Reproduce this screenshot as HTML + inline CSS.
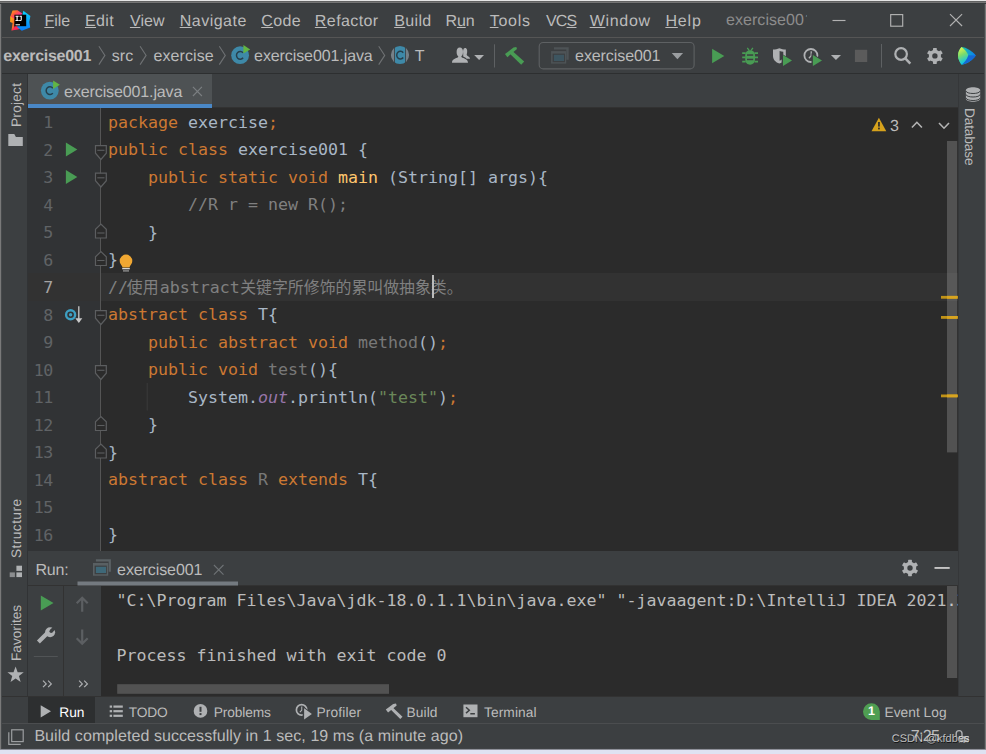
<!DOCTYPE html>
<html><head><meta charset="utf-8"><title>exercise001</title>
<style>
*{box-sizing:border-box;margin:0;padding:0}
html,body{width:986px;height:754px;overflow:hidden;background:#3c3f41}
body{position:relative;font-family:"Liberation Sans","Noto Sans CJK SC",sans-serif;font-size:16px;color:#bbbbbb}
.abs{position:absolute}
svg{position:absolute;overflow:visible}
.t{position:absolute;white-space:pre;line-height:1;text-rendering:geometricPrecision}
.t u{text-decoration:underline;text-decoration-thickness:1px;text-underline-offset:1.2px}
#menubar{left:0;top:0;width:986px;height:38px;background:#3c3f41;border-bottom:1px solid #555555}
#navbar{left:0;top:38px;width:986px;height:36px;background:#3c3f41;border-bottom:1px solid #2d2f30}
#lstrip{left:0;top:74px;width:28px;height:622px;background:#3c3f41;border-right:1px solid #313335}
#rstrip{left:958px;top:74px;width:28px;height:623px;background:#3c3f41;border-left:1px solid #353739}
#tabbar{left:28px;top:74px;width:930px;height:34px;background:#3c3f41;border-bottom:1px solid #323232}
#tab{left:28px;top:74px;width:184px;height:34px;background:#4e5254;border-bottom:4px solid #4a88c7}
#editor{left:28px;top:108px;width:930px;height:443px;background:#2b2b2b;overflow:hidden}
#gutter{left:0;top:0;width:72.5px;height:443px;background:#313335}
#gline{left:72.3px;top:0;width:1px;height:443px;background:#555555}
#caretrow{left:0;top:165px;width:930px;height:27.5px;background:#323232}
#caret{left:403.6px;top:167px;width:2px;height:23px;background:#bbbbbb}
.code{font-family:"DejaVu Sans Mono","Liberation Mono","Noto Sans CJK SC",monospace;font-size:16.61px;color:#a9b7c6;position:absolute;white-space:pre;height:27.5px;line-height:27.5px}
.ln{left:0;width:24.7px;text-align:right;color:#606366;letter-spacing:-0.5px;margin-top:0.7px}
.ln.cur{color:#a4a3a3}
.cl{left:80.0px}
.k{color:#cc7832}.c{color:#808080}.s{color:#6a8759}.f{color:#ffc66d}.i{color:#9876aa;font-style:italic}.g{color:#787878}
.cj{color:#808080;font-family:"Noto Sans CJK SC","Liberation Sans",sans-serif}
#runhdr{left:28px;top:551px;width:930px;height:35px;background:#3c3f41;border-bottom:1px solid #323232}
#runtool1{left:28px;top:586px;width:36px;height:110px;background:#3c3f41;border-right:1px solid #323232}
#runtool2{left:64px;top:586px;width:37px;height:110px;background:#3c3f41}
#console{left:101px;top:586px;width:857px;height:110px;background:#2b2b2b;overflow:hidden}
.con{font-family:"DejaVu Sans Mono","Liberation Mono","Noto Sans CJK SC",monospace;font-size:16.61px;color:#bbbbbb;position:absolute;white-space:pre;height:27.5px;line-height:27.5px;left:15.5px}
#toolstrip{left:0;top:696px;width:986px;height:28px;background:#3c3f41;border-top:1px solid #323232}
#runbtn{left:28px;top:697px;width:67px;height:26px;background:#2d2f30}
#statusbar{left:0;top:723px;width:986px;height:26px;background:#3c3f41;border-top:1px solid #4b4d4f}
#bottom{left:0;top:748px;width:986px;height:6px;background:linear-gradient(#3c3f41 0,#3c3f41 .4px,#55575b 1px,#9a9ca6 1.6px,#dfe2f2 2.2px,#dfe2f2 6px)}
#topedge{left:0;top:0;width:986px;height:4px;background:linear-gradient(#e6e6e6 0,#e6e6e6 1px,#626262 1px,#626262 2px,#757575 2px,#757575 3px,#393c3e 3px,#393c3e 4px)}
#leftedge{left:0;top:1px;width:2px;height:748px;background:linear-gradient(90deg,#797979 0,#797979 1px,#46494b 1px,#46494b 2px)}
#rightedge{left:984px;top:1px;width:2px;height:748px;background:linear-gradient(90deg,#484b4d 0,#484b4d 1px,#787878 1px,#787878 2px)}
</style></head><body>
<div class="abs" id="menubar"></div>
<div class="abs" id="navbar"></div>
<div class="abs" id="lstrip"></div>
<div class="abs" id="rstrip"></div>
<div class="abs" id="tabbar"></div>
<div class="abs" id="tab"></div>
<div class="abs" id="editor">
<div class="abs" id="gutter"></div>
<div class="abs" id="caretrow"></div>
<div class="abs" id="gline"></div>
<div class="code ln" style="top:0.80px">1</div>
<div class="code cl" style="top:0.80px"><span class="k">package</span> exercise<span class="k">;</span></div>
<div class="code ln" style="top:28.30px">2</div>
<div class="code cl" style="top:28.30px"><span class="k">public class</span> exercise001 {</div>
<div class="code ln" style="top:55.80px">3</div>
<div class="code cl" style="top:55.80px">    <span class="k">public static void</span> <span class="f">main</span> (String[] args){</div>
<div class="code ln" style="top:83.30px">4</div>
<div class="code cl" style="top:83.30px">        <span class="c">//R r = new R();</span></div>
<div class="code ln" style="top:110.80px">5</div>
<div class="code cl" style="top:110.80px">    }</div>
<div class="code ln" style="top:138.30px">6</div>
<div class="code cl" style="top:138.30px">}</div>
<div class="code ln cur" style="top:165.80px">7</div>
<div class="code ln" style="top:193.30px">8</div>
<div class="code cl" style="top:193.30px"><span class="k">abstract class</span> T{</div>
<div class="code ln" style="top:220.80px">9</div>
<div class="code cl" style="top:220.80px">    <span class="k">public abstract void</span> <span class="g">method</span>()<span class="k">;</span></div>
<div class="code ln" style="top:248.30px">10</div>
<div class="code cl" style="top:248.30px">    <span class="k">public void</span> <span class="g">test</span>(){</div>
<div class="code ln" style="top:275.80px">11</div>
<div class="code cl" style="top:275.80px">        System.<span class="i">out</span>.println(<span class="s">"test"</span>)<span class="k">;</span></div>
<div class="code ln" style="top:303.30px">12</div>
<div class="code cl" style="top:303.30px">    }</div>
<div class="code ln" style="top:330.80px">13</div>
<div class="code cl" style="top:330.80px">}</div>
<div class="code ln" style="top:358.30px">14</div>
<div class="code cl" style="top:358.30px"><span class="k">abstract class</span> <span class="g">R</span> <span class="k">extends</span> T{</div>
<div class="code ln" style="top:385.80px">15</div>
<div class="code ln" style="top:413.30px">16</div>
<div class="code cl" style="top:413.30px">}</div>
<div class="code cl c" style="top:165.80px;left:80.00px">//</div>
<div class="code cl cj" style="top:164.70px;left:98.80px;font-size:15.9px">使用</div>
<div class="code cl c" style="top:165.80px;left:131.80px">abstract</div>
<div class="code cl cj" style="top:164.70px;left:212.20px;font-size:15.9px">关键字所修饰的累叫做抽象类。</div>
<div class="abs" id="caret"></div>
<!--EDITOR_ICONS-->
</div>
<div class="abs" id="runhdr"></div>
<div class="abs" id="runtool1"></div>
<div class="abs" id="runtool2"></div>
<div class="abs" id="console">
<div class="con" style="top:0.80px">"C:\Program Files\Java\jdk-18.0.1.1\bin\java.exe" "-javaagent:D:\IntelliJ IDEA 2021.3</div>
<div class="con" style="top:55.80px">Process finished with exit code 0</div>
</div>
<div class="abs" id="toolstrip"></div>
<div class="abs" id="runbtn"></div>
<div class="abs" id="statusbar"></div>
<div class="abs" id="bottom"></div>
<div class="t" id="m_file" style="left:44.38px;top:13.52px;font-size:16px;color:#bbbbbb;letter-spacing:-0.018px;"><u>F</u>ile</div>
<div class="t" id="m_edit" style="left:84.98px;top:13.52px;font-size:16px;color:#bbbbbb;letter-spacing:0.412px;"><u>E</u>dit</div>
<div class="t" id="m_view" style="left:129.93px;top:13.52px;font-size:16px;color:#bbbbbb;letter-spacing:0.090px;"><u>V</u>iew</div>
<div class="t" id="m_nav" style="left:179.68px;top:13.52px;font-size:16px;color:#bbbbbb;letter-spacing:0.502px;"><u>N</u>avigate</div>
<div class="t" id="m_code" style="left:261.20px;top:13.52px;font-size:16px;color:#bbbbbb;letter-spacing:0.379px;"><u>C</u>ode</div>
<div class="t" id="m_ref" style="left:314.86px;top:13.52px;font-size:16px;color:#bbbbbb;letter-spacing:0.409px;"><u>R</u>efactor</div>
<div class="t" id="m_build" style="left:394.18px;top:13.52px;font-size:16px;color:#bbbbbb;letter-spacing:0.372px;"><u>B</u>uild</div>
<div class="t" id="m_run" style="left:445.40px;top:13.52px;font-size:16px;color:#bbbbbb;letter-spacing:-0.055px;">R<u>u</u>n</div>
<div class="t" id="m_tools" style="left:489.82px;top:13.52px;font-size:16px;color:#bbbbbb;letter-spacing:0.701px;"><u>T</u>ools</div>
<div class="t" id="m_vcs" style="left:545.96px;top:13.52px;font-size:16px;color:#bbbbbb;letter-spacing:-0.800px;">VC<u>S</u></div>
<div class="t" id="m_win" style="left:589.66px;top:13.52px;font-size:16px;color:#bbbbbb;letter-spacing:0.707px;"><u>W</u>indow</div>
<div class="t" id="m_help" style="left:665.38px;top:13.52px;font-size:16px;color:#bbbbbb;letter-spacing:0.886px;"><u>H</u>elp</div>
<div class="t" id="m_title" style="left:726.09px;top:12.72px;font-size:16px;color:#8c8c8c;letter-spacing:0.042px;">exercise00</div>
<div class="t" id="n_proj" style="left:3.36px;top:49.02px;font-size:16px;color:#bbbbbb;letter-spacing:-0.281px;font-weight:bold;">exercise001</div>
<div class="t" id="n_src" style="left:111.75px;top:49.02px;font-size:16px;color:#bbbbbb;letter-spacing:0.069px;">src</div>
<div class="t" id="n_ex" style="left:153.62px;top:49.02px;font-size:16px;color:#bbbbbb;letter-spacing:0.058px;">exercise</div>
<div class="t" id="n_file" style="left:254.09px;top:49.02px;font-size:16px;color:#bbbbbb;letter-spacing:-0.093px;">exercise001.java</div>
<div class="t" id="n_T" style="left:414.82px;top:49.02px;font-size:16px;color:#bbbbbb;letter-spacing:0.000px;">T</div>
<div class="t" id="n_cfg" style="left:575.11px;top:48.52px;font-size:16px;color:#bbbbbb;letter-spacing:-0.094px;">exercise001</div>
<div class="t" id="tab_t" style="left:64.11px;top:84.52px;font-size:16px;color:#bbbbbb;letter-spacing:-0.119px;">exercise001.java</div>
<div class="t" id="r_run" style="left:35.40px;top:562.52px;font-size:16px;color:#bbbbbb;letter-spacing:-0.193px;">Run:</div>
<div class="t" id="r_tab" style="left:117.11px;top:562.52px;font-size:16px;color:#bbbbbb;letter-spacing:-0.100px;">exercise001</div>
<div class="t" id="b_run" style="left:59.36px;top:705.56px;font-size:13.75px;color:#ffffff;letter-spacing:-0.121px;">Run</div>
<div class="t" id="b_todo" style="left:128.70px;top:705.56px;font-size:13.75px;color:#bbbbbb;letter-spacing:-0.146px;">TODO</div>
<div class="t" id="b_prob" style="left:213.64px;top:705.56px;font-size:13.75px;color:#bbbbbb;letter-spacing:-0.107px;">Problems</div>
<div class="t" id="b_prof" style="left:316.48px;top:705.56px;font-size:13.75px;color:#bbbbbb;letter-spacing:0.141px;">Profiler</div>
<div class="t" id="b_build" style="left:406.60px;top:705.56px;font-size:13.75px;color:#bbbbbb;letter-spacing:0.055px;">Build</div>
<div class="t" id="b_term" style="left:483.91px;top:705.56px;font-size:13.75px;color:#bbbbbb;letter-spacing:0.111px;">Terminal</div>
<div class="t" id="b_ev" style="left:884.48px;top:705.56px;font-size:13.75px;color:#bbbbbb;letter-spacing:0.019px;">Event Log</div>
<div class="t" id="s_msg" style="left:34.38px;top:729.02px;font-size:16px;color:#bbbbbb;letter-spacing:0.077px;">Build completed successfully in 1 sec, 19 ms (a minute ago)</div>
<div class="t" id="s_pos" style="left:910.64px;top:729.02px;font-size:16px;color:#bbbbbb;letter-spacing:-0.593px;">7:25</div>
<div class="t" id="w_cnt" style="left:890.09px;top:119.02px;font-size:16px;color:#bbbbbb;letter-spacing:0.000px;">3</div>
<!-- IntelliJ logo -->
<svg style="left:9.7px;top:9.5px" width="22" height="22" viewBox="0 0 22 22">
<defs>
<linearGradient id="lgA" x1="0" y1="0" x2="1" y2="1"><stop offset="0" stop-color="#fdb60d"/><stop offset=".35" stop-color="#ff5a3c"/><stop offset=".6" stop-color="#ff318c"/><stop offset="1" stop-color="#fe2857"/></linearGradient>
<linearGradient id="lgB" x1="0" y1="0" x2="0" y2="1"><stop offset="0" stop-color="#0cd0fb"/><stop offset="1" stop-color="#087cfa"/></linearGradient>
<linearGradient id="lgC" x1="0" y1="0" x2="1" y2="1"><stop offset="0" stop-color="#fdb60d"/><stop offset=".5" stop-color="#fc801d"/><stop offset="1" stop-color="#fe2857"/></linearGradient>
</defs>
<polygon points="2.600,0.400 7.500,0.200 12.300,3.400 8,10 1,8.500 0.300,6.500" fill="url(#lgA)"/>
<polygon points="0.300,6.500 5,9 4,19.500 1.500,20.500 2.600,13 0.100,12" fill="url(#lgC)"/>
<polygon points="1.500,20.500 8,13 12,18 8,19.500" fill="#fe2857"/>
<polygon points="13.300,0.800 20.400,6 19.300,12 20.200,17.500 11.800,20.800 7,17 12,8" fill="url(#lgB)"/>
<rect x="4.400" y="4.700" width="11.800" height="11.500" fill="#000"/>
<rect x="5.500" y="14.300" width="4.500" height="1" fill="#fff"/>
<path d="M5.500 5.800h3.200v1h-1v3.200h1v1h-3.200v-1h1v-3.200h-1z M9.500 5.800h2.300v3.700q0 1.600-1.500 1.600q-.900 0-1.400-.7l.7-.7q.3.400.6.400q.5 0 .5-.7v-2.600h-1.200z" fill="#fff"/>
</svg>
<!-- window controls -->
<svg style="left:832px;top:12px" width="140" height="18" viewBox="0 0 140 18">
<path d="M0.500 8.500h13" stroke="#b2b2b2" stroke-width="1.150" fill="none"/>
<rect x="58.700" y="2.600" width="12" height="11.600" stroke="#b2b2b2" stroke-width="1.150" fill="none"/>
<path d="M118 2.100l12.100 11.900M130.100 2.100l-12.100 11.900" stroke="#b2b2b2" stroke-width="1.150" fill="none"/>
</svg>
<!-- nav bar chevrons -->
<svg style="left:0;top:37px" width="986" height="37" viewBox="0 37 986 37">
<g stroke="#6e7173" stroke-width="1.1" fill="none">
<path d="M98.9 46.2l6 9.2l-6 9.2"/>
<path d="M140.1 46.2l6 9.2l-6 9.2"/>
<path d="M219.3 46.2l6 9.2l-6 9.2"/>
<path d="M378.7 46.2l6 9.2l-6 9.2"/>
</g>
<!-- class w/ run icon (nav) -->
<g id="clsrun">
<circle cx="240.1" cy="55.2" r="8.9" fill="#3e89a8"/>
<path d="M243.1 52.9a3.7 3.9 0 1 0 0 4.8" stroke="#27404d" stroke-width="1.5" fill="none"/>
<polygon points="243.4,45 250.2,49.4 243.4,53.6" fill="#62b543"/>
</g>
<!-- abstract class icon -->
<g>
<clipPath id="acl"><circle cx="400" cy="55" r="9.1"/></clipPath>
<g clip-path="url(#acl)">
<rect x="390" y="45" width="4.1" height="20" fill="#808c94" opacity=".85"/>
<rect x="394.9" y="45" width="10.3" height="20" fill="#3e89a8"/>
<rect x="406" y="45" width="4" height="20" fill="#808c94" opacity=".85"/>
</g>
<path d="M403.2 52.8a3.6 3.9 0 1 0 0 4.7" stroke="#27404d" stroke-width="1.5" fill="none"/>
</g>
<!-- users icon -->
<g fill="#afb1b3">
<path d="M463.200 53c-.3-1.700-.1-4.700 1.800-4.900c2-.1 2.500 2.600 2.100 4.600c-.2 1.100-.5 1.800-.3 2.400c.3 1 2.900 1.500 3.300 3.700h-3.500c-.6-1.100-2.100-1.700-3.400-2.300z"/>
<ellipse cx="459.800" cy="52.100" rx="3.200" ry="4.500"/>
<path d="M452 62.800c0-3.200 2.500-4.100 5.100-5c.9-.3 1.200-.9 1.200-1.800h3c0 .9.300 1.500 1.200 1.800c2.600.9 5.500 1.800 5.500 5z"/>
<polygon points="474.200,55.100 484,55.100 479.100,60.100"/>
</g>
<rect x="494" y="44.300" width="1" height="23.200" fill="#5e6163"/>
<!-- hammer -->
<g fill="#499c54">
<polygon points="505,53.900 513.500,47.500 516.300,47 517,49.100 507.300,57.200"/>
<polygon points="509.600,53.400 512.400,51 524.200,61.600 521.200,64.700"/>
</g>
<!-- run config box -->
<rect x="539.200" y="42.500" width="154.900" height="26.400" rx="4" ry="4" fill="none" stroke="#5e6163" stroke-width="1.100"/>
<path d="M554 47.200H568.700V59.800H566.300V49.600H554Z" fill="#4d5356"/>
<rect x="551.100" y="51.100" width="15.100" height="12.500" fill="#4e5457"/>
<rect x="552.600" y="53.600" width="12.300" height="8.600" fill="#3c3f41"/>
<rect x="553.900" y="54.800" width="10.100" height="6.200" fill="#3d5560"/>
<polygon points="671.700,53.100 683.100,53.100 677.400,59.200" fill="#9a9da0"/>
<!-- run -->
<polygon points="712.100,48.800 724.300,56 712.100,63.300" fill="#499c54"/>
<!-- bug -->
<g fill="#499c54" stroke="#499c54">
<path d="M745.200 55.500c0-3.700 2.200-5.200 4.900-5.200s4.900 1.500 4.900 5.200v3.500c0 3.700-2.200 5.700-4.900 5.700s-4.900-2-4.900-5.700z" stroke="none"/>
<path d="M747.300 47.800l1.800 2.600M752.900 47.800l-1.800 2.600" stroke-width="1.300" fill="none"/>
<path d="M742.200 53.100h3.500M742.200 57.400h3.500M742.200 61.700h3.500M754.500 53.100h3.500M754.500 57.400h3.500M754.500 61.700h3.500" stroke-width="1.700" fill="none"/>
</g>
<rect x="747" y="54.300" width="6.200" height="1.500" fill="#3c3f41"/>
<rect x="747" y="58.700" width="6.200" height="1.500" fill="#3c3f41"/>
<!-- coverage -->
<path d="M773 49.600c2.500-.2 4.300-.6 6.400-1.400c2.100.8 3.900 1.200 6.400 1.400v6.400c0 3.800-2.700 6.300-6.400 7.600c-3.700-1.300-6.400-3.800-6.400-7.600z" fill="#afb1b3"/>
<path d="M779.600 50.900c1.200.4 2.300.7 3.700.9v4.200c0 2.300-1.400 3.800-3.700 4.800z" fill="#3c3f41"/>
<polygon points="781.600,53.700 793.400,60.500 781.600,67.400" fill="#3c3f41"/>
<polygon points="783,55.100 792,60.500 783,65.900" fill="#499c54"/>
<!-- profiler -->
<circle cx="810.900" cy="55.500" r="6.500" fill="none" stroke="#afb1b3" stroke-width="1.800"/>
<path d="M811.200 51.300v4.400l-2.300 2.600" fill="none" stroke="#afb1b3" stroke-width="1.300"/>
<polygon points="811.500,53.200 824,60.500 811.500,67.900" fill="#3c3f41"/>
<polygon points="812.900,55.100 822,60.500 812.900,65.900" fill="#499c54"/>
<polygon points="830.900,54.900 841,54.900 835.950,60.100" fill="#afb1b3"/>
<rect x="854.900" y="49.800" width="12.300" height="12.200" fill="#5b5b5b"/>
<rect x="881" y="44" width="1" height="23.600" fill="#5e6163"/>
<!-- search -->
<circle cx="901.100" cy="54" r="5.800" fill="none" stroke="#afb1b3" stroke-width="2.200"/>
<path d="M905.300 58.400l5 5.300" stroke="#afb1b3" stroke-width="2.500" fill="none"/>
<!-- gear -->
<g transform="translate(934.900,55.900)">
<g fill="#afb1b3">
<rect x="-1.900" y="-8" width="3.800" height="16" rx=".6"/>
<rect x="-1.900" y="-8" width="3.800" height="16" rx=".6" transform="rotate(60)"/>
<rect x="-1.900" y="-8" width="3.800" height="16" rx=".6" transform="rotate(120)"/>
<circle r="6.100"/>
</g>
<circle r="2.700" fill="#3c3f41"/>
</g>
<!-- code-with-me style logo -->
<defs>
<linearGradient id="cwA" x1="0" y1="0" x2=".3" y2="1"><stop offset="0" stop-color="#fcf84a"/><stop offset=".5" stop-color="#7ddc6a"/><stop offset="1" stop-color="#07c3f2"/></linearGradient>
<linearGradient id="cwB" x1="0" y1="0" x2="1" y2="0"><stop offset="0" stop-color="#21d789"/><stop offset="1" stop-color="#087cfa"/></linearGradient>
</defs>
<path d="M961.500 47c5 .3 10.600 4 14.300 8.500c-3.200 4.600-8.600 8.300-14 9.300c-2-2.500-3.800-5.800-3.800-9.400c0-3.500 1.500-6.300 3.500-8.400z" fill="url(#cwB)"/>
<path d="M961.500 47c-2 2.100-3.500 4.900-3.500 8.400c0 3.600 1.800 6.900 3.800 9.400c2.800-2.500 5.700-6 6.500-9.600c-1-3-3.800-6.200-6.800-8.200z" fill="url(#cwA)"/>
<path d="M968.300 55.200l7.500.3c-3.200 4.600-8.600 8.300-14 9.300c2.800-2.500 5.700-6 6.500-9.600z" fill="#1568d6"/>
</svg>
<!-- tab icon + close -->
<svg style="left:0;top:74px" width="986" height="34" viewBox="0 74 986 34">
<g transform="translate(-190.300,35.400)">
<circle cx="240.100" cy="55.200" r="8.900" fill="#3e89a8"/>
<path d="M243.100 52.900a3.700 3.900 0 1 0 0 4.800" stroke="#27404d" stroke-width="1.500" fill="none"/>
<polygon points="243.400,45 250.200,49.400 243.400,53.600" fill="#62b543"/>
</g>
<path d="M192.900 86.800l9 9.200M201.900 86.800l-9 9.200" stroke="#7b7f82" stroke-width="1.100" fill="none"/>
</svg>
<svg style="left:0;top:0" width="986" height="754" viewBox="0 0 986 754">
<g fill="#afb1b3">
<path d="M8.3 134.1h6l1.6 2.9h6.900v9h-14.500z"/>
<rect x="16.400" y="565.700" width="5.600" height="5.200"/><rect x="16.400" y="572.400" width="5.600" height="4.700"/><rect x="9.700" y="572.400" width="5.200" height="4.700" fill="#8b8d8f"/>
<polygon points="15.60,666.40 17.66,672.17 23.78,672.34 18.93,676.08 20.65,681.96 15.60,678.50 10.55,681.96 12.27,676.08 7.42,672.34 13.54,672.17"/>
<path d="M965.900 90.300c0-4 14.300-4 14.300 0v8.500c0 4-14.300 4-14.300 0z"/>
</g>
<g fill="none" stroke="#3c3f41" stroke-width="1"><path d="M965.900 90.800c0 3.600 14.300 3.600 14.300 0M965.900 94.300c0 3.600 14.300 3.600 14.300 0M965.900 97.800c0 3.600 14.300 3.600 14.300 0"/></g>
<polygon points="65.900,142.40 77.300,149.50 65.900,156.60" fill="#499c54"/>
<polygon points="65.900,169.90 77.300,177.00 65.900,184.10" fill="#499c54"/>
<path d="M95.5 145.70H106.3V153.20L100.9 159.50L95.5 153.20Z" fill="#2b2b2b" stroke="#5c5e60" stroke-width="1.200"/><path d="M97.3 150.30H104.5" stroke="#5c5e60" stroke-width="1.100"/>
<path d="M95.5 173.20H106.3V180.70L100.9 187.00L95.5 180.70Z" fill="#2b2b2b" stroke="#5c5e60" stroke-width="1.200"/><path d="M97.3 177.80H104.5" stroke="#5c5e60" stroke-width="1.100"/>
<path d="M95.5 310.70H106.3V318.20L100.9 324.50L95.5 318.20Z" fill="#2b2b2b" stroke="#5c5e60" stroke-width="1.200"/><path d="M97.3 315.30H104.5" stroke="#5c5e60" stroke-width="1.100"/>
<path d="M95.5 365.70H106.3V373.20L100.9 379.50L95.5 373.20Z" fill="#2b2b2b" stroke="#5c5e60" stroke-width="1.200"/><path d="M97.3 370.30H104.5" stroke="#5c5e60" stroke-width="1.100"/>
<path d="M95.5 238.00H106.3V229.30L100.9 224.00L95.5 229.30Z" fill="#2b2b2b" stroke="#5c5e60" stroke-width="1.200"/><path d="M97.3 233.00H104.5" stroke="#5c5e60" stroke-width="1.100"/>
<path d="M95.5 265.50H106.3V256.80L100.9 251.50L95.5 256.80Z" fill="#2b2b2b" stroke="#5c5e60" stroke-width="1.200"/><path d="M97.3 260.50H104.5" stroke="#5c5e60" stroke-width="1.100"/>
<path d="M95.5 430.50H106.3V421.80L100.9 416.50L95.5 421.80Z" fill="#2b2b2b" stroke="#5c5e60" stroke-width="1.200"/><path d="M97.3 425.50H104.5" stroke="#5c5e60" stroke-width="1.100"/>
<path d="M95.5 458.00H106.3V449.30L100.9 444.00L95.5 449.30Z" fill="#2b2b2b" stroke="#5c5e60" stroke-width="1.200"/><path d="M97.3 453.00H104.5" stroke="#5c5e60" stroke-width="1.100"/>
<path d="M126 254.600a6.300 6.300 0 0 1 6.300 6.300c0 2.600-1.700 3.700-2.400 5.300c-.2.500-.3.900-.3 1.300h-7.200c0-.4-.1-.8-.3-1.300c-.7-1.600-2.400-2.700-2.400-5.300a6.300 6.300 0 0 1 6.300-6.300z" fill="#f0a732"/>
<rect x="122.200" y="268" width="7.600" height="1.300" fill="#d4d4d4"/><rect x="123" y="270.200" width="6" height="1.400" fill="#8c8c8c"/>
<circle cx="70.600" cy="314.800" r="5.700" fill="#3d9fc2"/><circle cx="70.600" cy="314.800" r="3.300" fill="#313335"/><circle cx="70.600" cy="314.800" r="1.700" fill="#3d9fc2"/>
<path d="M78.800 306.200v15.500" stroke="#c8c8c8" stroke-width="1.300" fill="none"/><polygon points="75.300,318.300 82.300,318.300 78.800,323" fill="#c8c8c8"/>
<rect x="146.700" y="383" width="1" height="27.500" fill="#3b3b3b"/>
<path d="M878.900 117.700l7.400 13.600h-14.800z" fill="#d6a21c"/><rect x="878.100" y="122" width="1.700" height="4.600" fill="#2b2b2b"/><rect x="878.100" y="127.600" width="1.700" height="1.800" fill="#2b2b2b"/>
<path d="M911.900 127.500l5-5.200l5 5.200M939 123l5 5.200l5-5.200" fill="none" stroke="#b4b4b4" stroke-width="1.600"/>
<rect x="947" y="141" width="10.200" height="311.400" fill="#ffffff" opacity=".19"/>
<rect x="941" y="295.90" width="17" height="2.800" fill="#bf9218"/>
<rect x="947" y="295.90" width="10.200" height="2.800" fill="#d9a520"/>
<rect x="941" y="316.00" width="17" height="2.800" fill="#bf9218"/>
<rect x="947" y="316.00" width="10.200" height="2.800" fill="#d9a520"/>
<rect x="941" y="394.50" width="17" height="2.800" fill="#bf9218"/>
<rect x="947" y="394.50" width="10.200" height="2.800" fill="#d9a520"/>
</svg><svg style="left:0;top:0" width="986" height="754" viewBox="0 0 986 754">
<!-- run header tab icon -->
<path d="M95.900 559.200H110.900V571.800H108.700V561.600H95.900Z" fill="#5a6164"/>
<rect x="93" y="563" width="15.200" height="12.700" fill="#596063"/>
<rect x="94.600" y="565.600" width="12.200" height="8.700" fill="#3c3f41"/>
<rect x="95.900" y="566.800" width="10.100" height="6.200" fill="#3e6878"/>
<path d="M213.900 565l9.600 9.600M223.500 565l-9.600 9.600" stroke="#6e7275" stroke-width="1.100" fill="none"/>
<rect x="77.500" y="581.500" width="160.500" height="4" fill="#747a80"/>
<!-- gear -->
<g transform="translate(910,568)">
<g fill="#afb1b3">
<rect x="-1.900" y="-8.200" width="3.800" height="16.400" rx=".6"/>
<rect x="-1.900" y="-8.200" width="3.800" height="16.400" rx=".6" transform="rotate(60)"/>
<rect x="-1.900" y="-8.200" width="3.800" height="16.400" rx=".6" transform="rotate(120)"/>
<circle r="6.200"/>
</g>
<circle r="2.700" fill="#3c3f41"/>
</g>
<rect x="934.500" y="567" width="15.200" height="1.900" fill="#c4c4c4"/>
<!-- run toolbar -->
<polygon points="40.800,595.600 53.500,603 40.800,610.500" fill="#499c54"/>
<g>
<path d="M38.4 642.1L48 632.5" stroke="#afb1b3" stroke-width="4.2" fill="none"/>
<circle cx="50.1" cy="632.3" r="5" fill="#afb1b3"/>
<path d="M51.3 631.1L56.5 625.9" stroke="#3c3f41" stroke-width="3.5" fill="none"/>
<circle cx="51.2" cy="631.2" r="1.75" fill="#3c3f41"/>
</g>
<rect x="33.800" y="656" width="24" height="1" fill="#515456"/>
<g fill="none" stroke="#afb1b3" stroke-width="1.200">
<path d="M43 680.7l3.200 3.200l-3.200 3.200M48.100 680.7l3.200 3.200l-3.200 3.200"/>
<path d="M79.100 680.7l3.200 3.200l-3.200 3.200M84.200 680.7l3.200 3.200l-3.200 3.200"/>
</g>
<g fill="none" stroke="#5c5f62" stroke-width="2.2">
<path d="M82.200 611.800v-14M76.700 603.300l5.500-5.600l5.500 5.600"/>
<path d="M82.200 629.600v14M76.700 638.200l5.500 5.600l5.500-5.600"/>
</g>
<!-- console scrollbars -->
<rect x="117.200" y="684.200" width="271.800" height="9.600" fill="#ffffff" opacity=".19"/>
<rect x="947" y="586" width="10.200" height="92" fill="#ffffff" opacity=".19"/>
<!-- tool strip icons -->
<g fill="#afb1b3">
<polygon points="40.700,705.200 51,711.300 40.700,717.400"/>
<rect x="109.700" y="705.500" width="2.400" height="2.200"/><rect x="113.400" y="705.500" width="9.400" height="2.200"/>
<rect x="109.700" y="710.100" width="2.400" height="2.200"/><rect x="113.400" y="710.100" width="9.400" height="2.200"/>
<rect x="109.700" y="714.700" width="2.400" height="2.200"/><rect x="113.400" y="714.700" width="9.400" height="2.200"/>
<circle cx="200.500" cy="710.900" r="6.800"/>
</g>
<rect x="199.500" y="706.800" width="2" height="5" fill="#3c3f41"/><rect x="199.500" y="713.100" width="2" height="2" fill="#3c3f41"/>
<!-- profiler -->
<circle cx="301.6" cy="709.9" r="5.2" fill="none" stroke="#afb1b3" stroke-width="1.7"/>
<path d="M301.800 706.500v3.600l-1.900 2" fill="none" stroke="#afb1b3" stroke-width="1.200"/>
<polygon points="302.700,706.300 314.100,713.900 302.700,721" fill="#3c3f41"/>
<polygon points="304.100,708.300 311.900,713.900 304.100,719.400" fill="#afb1b3"/>
<!-- build hammer -->
<g fill="#afb1b3">
<polygon points="385.8,709.6 393.2,704 396,703.5 396.7,705.5 388.1,712.6"/>
<polygon points="390.400,709.200 392.500,707.300 402.500,716.700 400.300,718.900"/>
</g>
<!-- terminal -->
<rect x="463.400" y="704.500" width="14.100" height="12.700" fill="#afb1b3"/>
<path d="M466 707.300l3.300 2.900l-3.300 2.900" fill="none" stroke="#3c3f41" stroke-width="1.500"/>
<rect x="470.300" y="713" width="4.600" height="1.500" fill="#3c3f41"/>
<!-- event log -->
<path d="M871.400 703.200a8.400 8.400 0 0 1 8.400 8.400v8.400h-8.400a8.400 8.400 0 0 1 0-16.800z" fill="#4f9e52"/>
<!-- status icon -->
<g fill="none" stroke="#9c9ea0" stroke-width="1.200">
<rect x="11.700" y="729.800" width="11.500" height="11.800"/>
<path d="M8.800 732.300v12h11.900"/>
</g>
<!-- lock -->
<rect x="958.900" y="736.200" width="9.900" height="6.500" fill="#afb1b3"/>
<path d="M956.200 736.500v-3a2.900 2.900 0 0 1 5.800 0v3" fill="none" stroke="#afb1b3" stroke-width="1.400"/>
</svg>


<div class="t rot" id="v_proj" style="left:10.2px;top:126.9px;font-size:13.75px;transform:rotate(-90deg);transform-origin:0 0;letter-spacing:0.2px">Project</div>
<div class="t rot" id="v_str" style="left:10.3px;top:557.9px;font-size:13.75px;transform:rotate(-90deg);transform-origin:0 0;letter-spacing:0.41px">Structure</div>
<div class="t rot" id="v_fav" style="left:10.4px;top:661.1px;font-size:13.75px;transform:rotate(-90deg);transform-origin:0 0;letter-spacing:-0.05px">Favorites</div>
<div class="t rot" id="v_db" style="left:976.3px;top:108.2px;font-size:13.75px;transform:rotate(90deg);transform-origin:0 0;letter-spacing:-0.19px">Database</div>
<div class="t" style="left:804.4px;top:13.52px;font-size:16px;color:#8c8c8c;width:2.2px;height:5.5px;margin-top:-1px;overflow:hidden">1</div>
<div class="t" id="ev_n" style="left:867.9px;top:705.3px;font-size:12.5px;color:#fff;font-weight:bold">1</div>
<div class="t" id="wm" style="left:891.8px;top:733.6px;font-size:11px;color:rgba(232,232,232,.78);text-shadow:0.5px 0.5px 0.6px rgba(0,0,0,.75);letter-spacing:-0.02px">CSDN @kfdbes</div>

<div class="abs" id="leftedge"></div>
<div class="abs" id="rightedge"></div>
<div class="abs" id="topedge"></div>
</body></html>
